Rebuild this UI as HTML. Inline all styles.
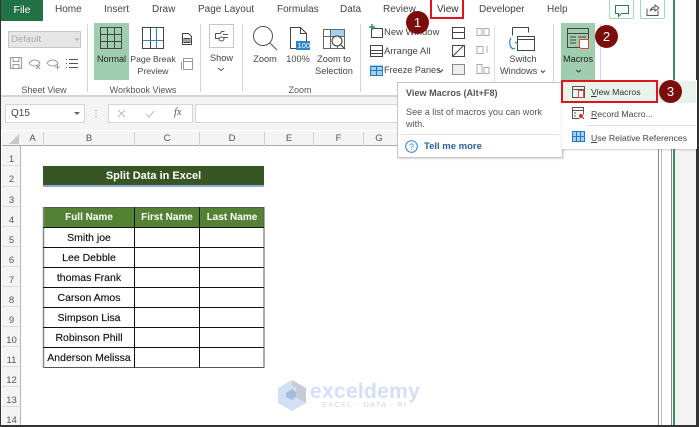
<!DOCTYPE html>
<html><head><meta charset="utf-8"><style>
*{box-sizing:border-box}
html,body{margin:0;padding:0;background:#fff}
#p{position:relative;width:699px;height:427px;overflow:hidden;background:#fff;font-family:"Liberation Sans",sans-serif;color:#444}
.t{position:absolute;white-space:nowrap;line-height:12px;font-size:8.700px;color:#444}
.c{text-align:center}
.b{position:absolute}
svg{position:absolute;left:0;top:0}
.tab{font-size:10px;top:4px;color:#444}
.rh{position:absolute;left:2px;width:19px;text-align:center;font-size:9.500px;color:#555;line-height:12px;border-bottom:1px solid #dcdcdc;padding-top:8px}
.ch{position:absolute;top:132px;font-size:9.500px;color:#555;text-align:center;line-height:14px;height:14px;border-right:1px solid #d0d0d0}
.cell{position:absolute;font-size:10.500px;color:#111;text-align:center;-webkit-text-stroke:.15px #111;line-height:12px}
.badge{position:absolute;border-radius:50%;background:#7b0d0d;color:#fff;width:23px;height:23px;line-height:23px;text-align:center;font-size:13px}
</style></head><body><div id="p">
<div class="b" style="left:0;top:0;width:1px;height:427px;background:#333"></div>
<div class="b" style="left:1px;top:0;width:42px;height:21px;background:#217346;color:#fff;font-size:10.500px;text-align:center;line-height:20px">File</div>
<div class="t tab" style="left:55px">Home</div>
<div class="t tab" style="left:104px">Insert</div>
<div class="t tab" style="left:152px">Draw</div>
<div class="t tab" style="left:198px">Page Layout</div>
<div class="t tab" style="left:277px">Formulas</div>
<div class="t tab" style="left:340px">Data</div>
<div class="t tab" style="left:383px">Review</div>
<div class="t tab" style="left:437px;color:#333">View</div>
<div class="b" style="left:430px;top:0;width:34px;height:19px;border:2px solid #e0141c;border-top:0"></div>
<div class="t tab" style="left:479px">Developer</div>
<div class="t tab" style="left:547px">Help</div>
<div class="b" style="left:609px;top:0;width:25px;height:19px;border:1px solid #a9d5bd;border-top:0;border-radius:0 0 2px 2px"></div>
<div class="b" style="left:640px;top:0;width:25px;height:19px;border:1px solid #a9d5bd;border-top:0;border-radius:0 0 2px 2px"></div>
<svg width="699" height="427" fill="none" stroke="#555">
<path d="M615.500 5.500h13v8h-7l-3 3v-3h-3z" stroke="#2d7a50"/>
<path d="M647 8.500v7h11v-5M650 11c1-3 3-4 5-4V5l4 3-4 3V9c-2 0-4 1-5 2z" stroke="#555"/>
</svg>
<div class="b" style="left:1px;top:95px;width:698px;height:2px;background:#d4d4d4"></div>
<div class="b" style="left:8px;top:31px;width:73px;height:17px;background:#e6e6e6;border:1px solid #c6c6c6;font-size:9.500px;color:#aaa;padding:2px 2px;line-height:12px">Default</div>
<svg width="699" height="427" fill="none" stroke="#999">
<path d="M75 38l2 2 2-2" stroke="#aaa"/>
<path d="M10.500 57.500h11v11h-11zM13 57.500v4h6v-4M13 68.500v-4h6v4"/>
<path d="M29 63c3-4 8-4 11 0-3 4-8 4-11 0zM36 65l4 4m0-4l-4 4"/>
<path d="M47 63c3-4 8-4 11 0-3 4-8 4-11 0zM55 67h5m-2.500-2.500v5" />
<path d="M66 59.500h1M66 63.500h1M66 67.500h1M69 59.500h9M69 63.500h9M69 67.500h9" stroke="#555"/>
</svg>
<div class="t c" style="left:14px;width:60px;top:84px;color:#555;font-size:9px">Sheet View</div>
<div class="b" style="left:87px;top:24px;width:1px;height:68px;background:#d4d4d4"></div>
<div class="b" style="left:94px;top:23px;width:35px;height:57px;background:#a0cdb0"></div>
<svg width="699" height="427" fill="none" stroke="#444">
<path d="M100.500 27.500h21v21h-21zM107.500 27.500v21M114.500 27.500v21M100.500 34.500h21M100.500 41.500h21"/>
<path d="M142.500 27.500h21v21h-21zM150.500 27.500v21"/><path d="M156.500 27.500v21M142.500 40.500h21" stroke="#2e86c9"/>
<path d="M182.500 33.500h6l3 3v8h-9zM184 38.500h6v4h-6zM186 38v5M188 38v5" />
<path d="M181.500 61.500v8M183.500 58.500h9v11h-9zM183.500 61.500h9" stroke="#999"/>
</svg>
<div class="t c" style="left:94px;width:35px;top:53px;color:#222;font-size:9px">Normal</div>
<div class="t c" style="left:129px;width:48px;top:53px">Page Break</div>
<div class="t c" style="left:129px;width:48px;top:65px">Preview</div>
<div class="t c" style="left:93px;width:100px;top:84px;color:#555;font-size:9px">Workbook Views</div>
<div class="b" style="left:200px;top:24px;width:1px;height:68px;background:#d4d4d4"></div>
<div class="b" style="left:209px;top:24px;width:25px;height:24px;border:1px solid #c6c6c6"></div>
<svg width="699" height="427" fill="none" stroke="#555">
<path d="M215.500 33.500h5l1-2h3M215.500 33.500v5h4M223 34.500h5M223 37.500h5M219 39a2.500 2 0 1 0 5 0a2.500 2 0 1 0-5 0"/>
<path d="M218 68l3 2.500 3-2.500"/>
</svg>
<div class="t c" style="left:201px;width:41px;top:52px;font-size:9.200px">Show</div>
<div class="b" style="left:242px;top:24px;width:1px;height:68px;background:#d4d4d4"></div>
<svg width="699" height="427" fill="none" stroke="#555">
<circle cx="263" cy="36" r="9.500" stroke="#555"/><path d="M270 43l7 7" stroke="#666" stroke-width="1.200"/>
<path d="M290.500 27.500h10l6 6v15h-16zM300.500 27.500v6h6" stroke="#444"/>
<path d="M323.500 29.500h21v19h-21zM323.500 36.500h21M330.500 29.500v19M337.500 29.500v19" stroke="#666"/>
<rect x="331" y="30" width="13" height="6" fill="#a8d0ee" stroke="none"/>
<circle cx="337" cy="41" r="5" stroke="#333" fill="#fff"/><path d="M341 45l4 4" stroke="#333"/>
</svg>
<div class="b" style="left:296px;top:41px;width:14px;height:9px;background:#2e86c9;color:#fff;font-size:7.500px;line-height:9px;text-align:right">100</div>
<div class="t c" style="left:250px;width:30px;top:53px;font-size:9.200px">Zoom</div>
<div class="t c" style="left:284px;width:28px;top:53px;font-size:9.200px">100%</div>
<div class="t c" style="left:314px;width:40px;top:53px;font-size:9.200px">Zoom to</div>
<div class="t c" style="left:314px;width:40px;top:65px;font-size:9.200px">Selection</div>
<div class="t c" style="left:280px;width:40px;top:84px;color:#555;font-size:9px">Zoom</div>
<div class="b" style="left:360px;top:24px;width:1px;height:68px;background:#d4d4d4"></div>
<svg width="699" height="427" fill="none" stroke="#444">
<path d="M371.500 28.500h11v9h-11z"/><path d="M372 24v6M369 27h6" stroke="#2a9a55" stroke-width="1.500"/>
<path d="M370.500 45.500h12v11h-12zM370.500 50.500h12M370.500 53.500h12"/>
<rect x="370" y="65" width="13" height="11" fill="#a8d0ee" stroke="none"/>
<path d="M370.500 66.500h12v9h-12zM376.500 66.500v9M370.500 70.500h12" stroke="#2277c5"/>
<path d="M452.500 27.500h12v11h-12zM452.500 32.500h12"/>
<path d="M452.500 45.500h12v11h-12zM453 56l11-11"/>
<path d="M452.500 64.500h12v10h-12z" stroke="#888" fill="#eee"/>
<path d="M477 28.500h5v7h-5zM484 28.500h5v7h-5zM477 46.500h6v7h-6zM487 46v7M477 64.500h5v9h-5zM484 67.500h5v6h-5z" stroke="#aaa"/>
<path d="M494.500 26v64" stroke="#ddd"/>
<path d="M512.500 27.500h16v5M512.500 27.500v8" stroke="#444"/>
<path d="M517.500 36.500h17v14h-17zM517.500 39.500h17" stroke="#444"/>
<path d="M511 38c-2 3-2 9 2 11m-2-2l2 2 2-1M515 42l3 2" stroke="#2e86c9" stroke-width="1.200"/>
<path d="M438 69.500l2.500 2.500 2.500-2.500M541 70.500l2 2 2-2"/>
</svg>
<div class="t" style="left:384px;top:27px;font-size:9.500px">New Window</div>
<div class="t" style="left:384px;top:46px;font-size:9.500px">Arrange All</div>
<div class="t" style="left:384px;top:64px;font-size:9.100px">Freeze Panes</div>
<div class="t c" style="left:503px;width:40px;top:53px;font-size:9.200px">Switch</div>
<div class="t" style="left:500px;top:65px;font-size:9.200px">Windows</div>
<div class="b" style="left:553px;top:24px;width:1px;height:68px;background:#d4d4d4"></div>
<div class="b" style="left:561px;top:23px;width:34px;height:57px;background:#a0cdb0"></div>
<svg width="699" height="427" fill="none" stroke="#444">
<path d="M567.500 28.500h21v19h-21zM567.500 33.500h21M570 37h6M570 40h6M570 43h6M578 37h8" stroke="#444"/>
<path d="M579.500 39.500h9v9h-7l-2-1z" fill="#fff" stroke="#e0483c"/>
<path d="M576 70l2.500 2 2.500-2" stroke="#333"/>
</svg>
<div class="t c" style="left:561px;width:34px;top:53px;color:#222;font-size:9.200px">Macros</div>
<div class="b" style="left:600px;top:24px;width:1px;height:68px;background:#d4d4d4"></div>
<div class="badge" style="left:406px;top:11px;">1</div>

<!-- formula bar -->
<div class="b" style="left:1px;top:97px;width:698px;height:33px;background:#f4f4f4"></div>
<div class="b" style="left:5px;top:104px;width:80px;height:19px;background:#fff;border:1px solid #d6d6d6;font-size:10px;color:#444;line-height:17px;padding-left:5px">Q15</div>
<svg width="699" height="427" fill="none" stroke="#888">
<path d="M74 112l3 3 3-3z" fill="#666" stroke="none"/>
<path d="M96 110v1M96 113v1M96 116v1" stroke="#999"/>
</svg>
<div class="b" style="left:108px;top:104px;width:85px;height:19px;background:#fff;border:1px solid #d6d6d6"></div>
<svg width="699" height="427" fill="none" stroke="#bbb">
<path d="M118 110l7 7m0-7l-7 7M146 114l3 3 5-6"/>
</svg>
<div class="t" style="left:174px;top:107px;font-family:'Liberation Serif',serif;font-style:italic;font-size:10.500px;color:#555">fx</div>
<div class="b" style="left:195px;top:104px;width:480px;height:19px;background:#fff;border:1px solid #d6d6d6"></div>

<!-- grid headers -->
<div class="b" style="left:1px;top:130px;width:657px;height:296px;background:#fff"></div>
<div class="b" style="left:2px;top:131px;width:656px;height:15px;background:#f4f4f4;border-bottom:1px solid #a9a9a9"></div>
<div class="b" style="left:2px;top:146px;width:19px;height:279px;background:#f4f4f4;border-right:1px solid #b5b5b5"></div>
<svg width="699" height="427"><path d="M19 134v10h-10z" fill="#c8c8c8"/></svg>
<div class="ch" style="left:22px;width:22px;">A</div>
<div class="ch" style="left:44px;width:91px;">B</div>
<div class="ch" style="left:135px;width:65px;">C</div>
<div class="ch" style="left:200px;width:65px;">D</div>
<div class="ch" style="left:265px;width:49px;">E</div>
<div class="ch" style="left:314px;width:50px;">F</div>
<div class="ch" style="left:364px;width:30px;border:0">G</div>
<div class="rh" style="top:146px;height:20px">1</div>
<div class="rh" style="top:166px;height:21px">2</div>
<div class="rh" style="top:187px;height:20px">3</div>
<div class="rh" style="top:207px;height:20px">4</div>
<div class="rh" style="top:227px;height:20px">5</div>
<div class="rh" style="top:247px;height:20px">6</div>
<div class="rh" style="top:267px;height:20px">7</div>
<div class="rh" style="top:287px;height:20px">8</div>
<div class="rh" style="top:307px;height:20px">9</div>
<div class="rh" style="top:327px;height:20px">10</div>
<div class="rh" style="top:347px;height:20px">11</div>
<div class="rh" style="top:367px;height:20px">12</div>
<div class="rh" style="top:387px;height:20px">13</div>
<div class="rh" style="top:407px;height:18px;border:0">14</div>

<!-- title -->
<div class="b" style="left:43px;top:166px;width:221px;height:21px;background:#375623;border-bottom:2px solid #8eaadb;color:#fff;font-size:11px;font-weight:700;text-align:center;line-height:21px">Split Data in Excel</div>

<!-- table -->
<div class="b" style="left:43px;top:207px;width:221px;height:21px;background:#548235"></div>
<svg width="699" height="427" fill="none" stroke="#111">
<path d="M43.500 207.500h220.500v160H43.500z" stroke="#555"/>
<path d="M43.500 207v161" stroke="#888" stroke-width="1.500"/>
<path d="M134.500 207v161M199.500 207v161M43 227.500h221M43 247.500h221M43 267.500h221M43 287.500h221M43 307.500h221M43 327.500h221M43 347.500h221"/>
</svg>
<div class="t c" style="left:44px;width:90px;top:212px;color:#fff;font-weight:700;font-size:10px">Full Name</div>
<div class="t c" style="left:135px;width:64px;top:212px;color:#fff;font-weight:700;font-size:10px">First Name</div>
<div class="t c" style="left:200px;width:64px;top:212px;color:#fff;font-weight:700;font-size:10px">Last Name</div>
<div class="cell" style="left:44px;width:90px;top:232px">Smith joe</div>
<div class="cell" style="left:44px;width:90px;top:252px">Lee Debble</div>
<div class="cell" style="left:44px;width:90px;top:272px">thomas Frank</div>
<div class="cell" style="left:44px;width:90px;top:292px">Carson Amos</div>
<div class="cell" style="left:44px;width:90px;top:312px">Simpson Lisa</div>
<div class="cell" style="left:44px;width:90px;top:332px">Robinson Phill</div>
<div class="cell" style="left:44px;width:90px;top:352px">Anderson Melissa</div>

<!-- watermark -->
<svg width="699" height="427">
<path d="M292 380l14 8v15l-14 8-14-8v-15z" fill="#d3dff5"/>
<path d="M292 380l14 8v15l-10-6v-9l-4-2z" fill="#c6ccd6"/>
<path d="M286 393l6-4 4 3v5l-4 3-6-3z" fill="#a8bce0"/>
</svg>
<div class="t" style="left:310px;top:381px;font-size:21px;line-height:22px;font-weight:700;color:#d5e0f6;letter-spacing:.3px">exceldemy</div>
<div class="t" style="left:322px;top:400px;font-size:7.500px;line-height:10px;color:#d0d4dc;letter-spacing:1.300px">EXCEL - DATA - BI</div>

<!-- right lines -->
<div class="b" style="left:658px;top:149px;width:1px;height:277px;background:#888"></div>
<div class="b" style="left:661px;top:149px;width:1px;height:277px;background:#bbb"></div>
<div class="b" style="left:671px;top:149px;width:1px;height:277px;background:#888"></div>
<div class="b" style="left:673px;top:0;width:2px;height:426px;background:#3d8a62"></div>
<div class="b" style="left:675px;top:97px;width:22px;height:329px;background:#f3f3f3"></div>
<div class="b" style="left:675px;top:0;width:22px;height:97px;background:#fff"></div>
<div class="b" style="left:696px;top:0;width:3px;height:427px;background:#333"></div>
<div class="b" style="left:0;top:425px;width:699px;height:2px;background:#333"></div>

<!-- tooltip -->
<div class="b" style="left:397px;top:82px;width:166px;height:76px;background:#fff;border:1px solid #c6c6c6;box-shadow:1px 1px 2px rgba(0,0,0,.15)"></div>
<div class="t" style="left:406px;top:87px;font-weight:700;font-size:9.100px;color:#555">View Macros (Alt+F8)</div>
<div class="t" style="left:406px;top:106px;color:#555;font-size:9.100px">See a list of macros you can work</div>
<div class="t" style="left:406px;top:118px;color:#555;font-size:9.100px">with.</div>
<div class="b" style="left:401px;top:134px;width:158px;height:1px;background:#e0e0e0"></div>
<svg width="699" height="427" fill="none" stroke="#2e86c9"><circle cx="411.500" cy="146.500" r="5.800"/></svg>
<div class="t c" style="left:406px;width:11px;top:141px;color:#2e86c9;font-size:9px">?</div>
<div class="t" style="left:424px;top:141px;font-weight:700;color:#2b5f9e;font-size:9.500px">Tell me more</div>

<!-- menu -->
<div class="b" style="left:562px;top:80px;width:135px;height:69px;background:#fff;box-shadow:0 1px 2px rgba(0,0,0,.2)"></div>
<div class="b" style="left:562px;top:81px;width:134px;height:22px;background:#e9f3ec"></div>
<div class="b" style="left:561px;top:80px;width:97px;height:23px;border:2px solid #e0141c"></div>
<svg width="699" height="427" fill="none" stroke="#555">
<path d="M572.500 86.500h12v11h-12zM572.500 89.500h12"/>
<path d="M578.500 90.500h5v7h-5z" fill="#fff" stroke="#e0483c"/>
<path d="M572.500 107.500h11v11h-11zM572.500 110.500h11M574 113h2M574 116h2"/>
<circle cx="581" cy="116" r="2.500" fill="#e02a2a" stroke="#fff"/>
<rect x="572" y="131" width="12" height="11" fill="#a8d0ee" stroke="none"/>
<path d="M572.500 131.500h12v10h-12zM576.500 131.500v10M580.500 131.500v10M572.500 136.500h12" stroke="#2277c5"/>
</svg>
<div class="t" style="left:591px;top:86px;color:#333"><u>V</u>iew Macros</div>
<div class="t" style="left:591px;top:108px;color:#444"><u>R</u>ecord Macro...</div>
<div class="b" style="left:587px;top:125px;width:109px;height:1px;background:#e0e0e0"></div>
<div class="t" style="left:591px;top:132px;color:#444"><u>U</u>se Relative References</div>
<div class="badge" style="left:595px;top:25px;">2</div>
<div class="badge" style="left:659px;top:80px;">3</div>
</div></body></html>
